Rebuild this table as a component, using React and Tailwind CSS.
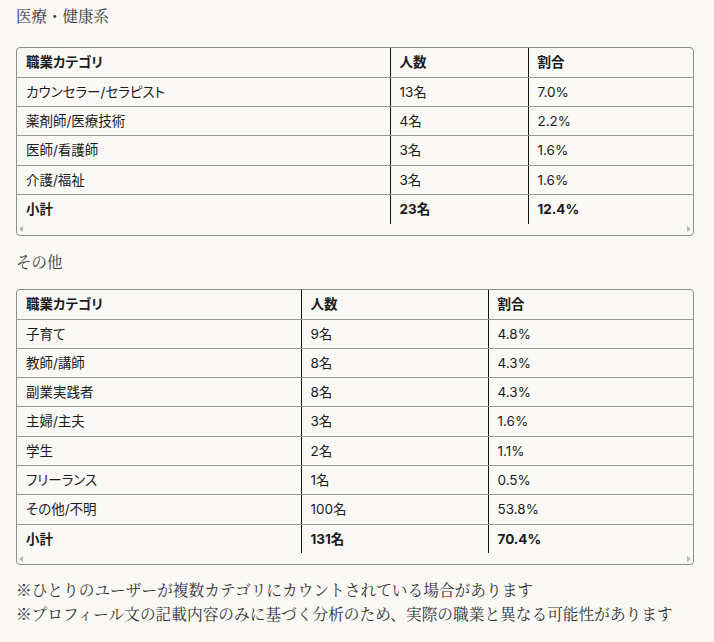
import React from "react";

const serif = "font-['Noto_Serif_CJK_JP','Liberation_Serif',serif]";
const sans = "font-['Inter','Noto_Sans_CJK_JP',sans-serif] [font-feature-settings:'palt']";

const medical = [
  ["カウンセラー/セラピスト", "13名", "7.0%"],
  ["薬剤師/医療技術", "4名", "2.2%"],
  ["医師/看護師", "3名", "1.6%"],
  ["介護/福祉", "3名", "1.6%"],
];

const others = [
  ["子育て", "9名", "4.8%"],
  ["教師/講師", "8名", "4.3%"],
  ["副業実践者", "8名", "4.3%"],
  ["主婦/主夫", "3名", "1.6%"],
  ["学生", "2名", "1.1%"],
  ["フリーランス", "1名", "0.5%"],
  ["その他/不明", "100名", "53.8%"],
];

const Cell = ({ children, first, last, bold }) => (
  <td
    className={`h-[29.3px] px-[9px] py-0 align-middle ${
      last ? "" : "border-b border-[#9a9a9a]"
    } ${first ? "" : "border-l border-l-[#111]"} ${bold ? "font-bold" : ""}`}
  >
    {children}
  </td>
);

const DataTable = ({ rows, total, cols }) => (
  <div className="rounded-[4px] border border-[#8e8e8e] overflow-hidden">
    <table className={`w-full border-collapse table-fixed text-[13.5px] text-[#1b1b1b] ${sans}`}>
      <colgroup>
        <col className={cols[0]} />
        <col className={cols[1]} />
        <col />
      </colgroup>
      <thead>
        <tr>
          <Cell first bold>職業カテゴリ</Cell>
          <Cell bold>人数</Cell>
          <Cell bold>割合</Cell>
        </tr>
      </thead>
      <tbody>
        {rows.map((r) => (
          <tr key={r[0]}>
            <Cell first>{r[0]}</Cell>
            <Cell>{r[1]}</Cell>
            <Cell>{r[2]}</Cell>
          </tr>
        ))}
        <tr>
          <Cell first last bold>小計</Cell>
          <Cell last bold>{total[0]}</Cell>
          <Cell last bold>{total[1]}</Cell>
        </tr>
      </tbody>
    </table>
    {/* horizontal scrollbar strip */}
    <div className="h-[11px] flex items-center justify-between px-[2px]">
      <div className="w-0 h-0 border-y-[3px] border-y-transparent border-r-[4px] border-r-[#b5b5b5]" />
      <div className="w-0 h-0 border-y-[3px] border-y-transparent border-l-[4px] border-l-[#b5b5b5]" />
    </div>
  </div>
);

export default function App() {
  return (
    <div className="min-h-screen bg-[#f9f8f5] pl-4 pr-5 pt-[3px]">
      <h2 className={`text-[15.5px] leading-[24px] font-normal text-[#3a3a3a] mb-[20px] ${serif}`}>
        医療・健康系
      </h2>
      <DataTable rows={medical} total={["23名", "12.4%"]} cols={["w-[373px]", "w-[138px]"]} />

      <h2 className={`text-[15.5px] leading-[24px] font-normal text-[#3a3a3a] mt-[13px] mb-[16px] ${serif}`}>
        その他
      </h2>
      <DataTable rows={others} total={["131名", "70.4%"]} cols={["w-[284px]", "w-[187px]"]} />

      <div className={`mt-[12px] text-[15.7px] leading-[24px] text-[#333] ${serif}`}>
        <p>※ひとりのユーザーが複数カテゴリにカウントされている場合があります</p>
        <p>※プロフィール文の記載内容のみに基づく分析のため、実際の職業と異なる可能性があります</p>
      </div>
    </div>
  );
}
